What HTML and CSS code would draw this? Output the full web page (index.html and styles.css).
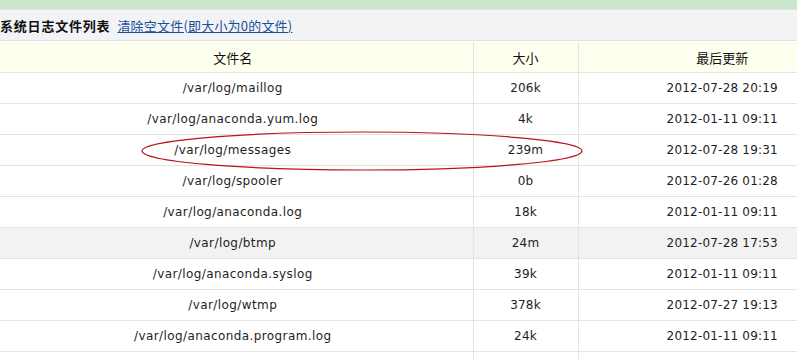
FILE: index.html
```html
<!DOCTYPE html>
<html lang="zh">
<head>
<meta charset="utf-8">
<title>系统日志文件列表</title>
<link rel="stylesheet" href="styles.css">
</head>
<body>
<div class="page">
  <div class="topbar"></div>
  <div class="titlebar">
    <span class="title">系统日志文件列表</span>
    <a class="clear-link" href="#">清除空文件(即大小为0的文件)</a>
  </div>
  <div class="table-wrap">
    <table class="logs">
      <colgroup>
        <col class="c-name"><col class="c-size"><col class="c-date">
      </colgroup>
      <thead>
        <tr><th>文件名</th><th>大小</th><th>最后更新</th></tr>
      </thead>
      <tbody>
        <tr><td class="path">/var/log/maillog</td><td class="size">206k</td><td class="date">2012-07-28 20:19</td></tr>
        <tr><td class="path">/var/log/anaconda.yum.log</td><td class="size">4k</td><td class="date">2012-01-11 09:11</td></tr>
        <tr><td class="path">/var/log/messages</td><td class="size">239m</td><td class="date">2012-07-28 19:31</td></tr>
        <tr><td class="path">/var/log/spooler</td><td class="size">0b</td><td class="date">2012-07-26 01:28</td></tr>
        <tr><td class="path">/var/log/anaconda.log</td><td class="size">18k</td><td class="date">2012-01-11 09:11</td></tr>
        <tr class="hover"><td class="path">/var/log/btmp</td><td class="size">24m</td><td class="date">2012-07-28 17:53</td></tr>
        <tr><td class="path">/var/log/anaconda.syslog</td><td class="size">39k</td><td class="date">2012-01-11 09:11</td></tr>
        <tr><td class="path">/var/log/wtmp</td><td class="size">378k</td><td class="date">2012-07-27 19:13</td></tr>
        <tr><td class="path">/var/log/anaconda.program.log</td><td class="size">24k</td><td class="date">2012-01-11 09:11</td></tr>
        <tr><td class="path">&nbsp;</td><td class="size">&nbsp;</td><td class="date">&nbsp;</td></tr>
      </tbody>
    </table>
    <svg class="mark" width="460" height="44" viewBox="0 0 460 44">
      <ellipse cx="230" cy="22" rx="220" ry="19" fill="none" stroke="#b8141c" stroke-width="1.2"/>
    </svg>
  </div>
</div>
</body>
</html>
```

FILE: styles.css
```css
html, body {
  margin: 0;
  padding: 0;
  background: #ffffff;
}
body {
  overflow: hidden;
  font-family: "DejaVu Sans", "Noto Sans CJK SC", sans-serif;
  color: #222;
}
.page {
  width: 797px;
  height: 359px;
  overflow: hidden;
}
.topbar {
  height: 9px;
  background: #cbe8cc;
  border-bottom: 1px solid #dfe6df;
}
.titlebar {
  height: 30px;
  background: #f2f3f5;
  border-bottom: 1px solid #e1e2e4;
  display: flex;
  align-items: center;
  gap: 7px;
  font-family: "Noto Sans CJK SC", sans-serif;
  font-size: 13px;
}
.title {
  font-weight: bold;
  letter-spacing: 0.8px;
  color: #111;
}
.clear-link {
  color: #1b4f9c;
  text-decoration: underline;
  letter-spacing: 0.2px;
}
.table-wrap {
  position: relative;
  margin-left: -7px;
  padding-top: 1px;
}
.logs {
  border-collapse: collapse;
  table-layout: fixed;
  width: 873px;
}
.c-name { width: 480px; }
.c-size { width: 105px; }
.c-date { width: 288px; }
.logs th {
  height: 30px;
  padding: 0;
  background: #fffff0;
  border-bottom: 1px solid #e3e3e3;
  border-right: 1px solid #e3e3e3;
  font-family: "Noto Sans CJK SC", sans-serif;
  font-weight: normal;
  font-size: 13px;
  color: #111;
  text-align: center;
}
.logs td {
  height: 30px;
  padding: 0;
  border-bottom: 1px solid #e3e3e3;
  border-right: 1px solid #e3e3e3;
  font-size: 12px;
  text-align: center;
  color: #1e1e1e;
}
.logs th:last-child, .logs td:last-child { border-right: none; }
.logs tr.hover td { background: #f2f2f2; }
.path { letter-spacing: 0.4px; }
.size { letter-spacing: 0.2px; }
.date { letter-spacing: 0.2px; }
.mark {
  position: absolute;
  left: 139px;
  top: 88px;
  pointer-events: none;
}
```
